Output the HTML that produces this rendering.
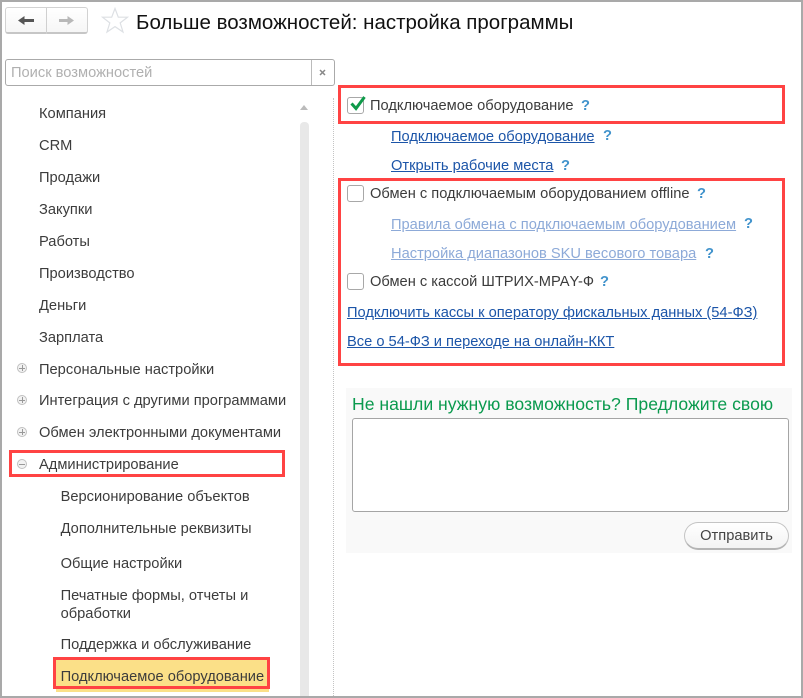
<!DOCTYPE html>
<html><head><meta charset="utf-8"><style>
html,body{margin:0;padding:0;background:#fff}
#p{position:relative;width:803px;height:698px;overflow:hidden;background:#fff;font-family:"Liberation Sans",sans-serif;font-size:14.67px;color:#3c3c3c}
#p div,#p a,#p svg{position:absolute}
.t{line-height:20px;white-space:nowrap;height:20px;margin-top:1px}
a.l{color:#1c55a8;text-decoration:underline;line-height:20px;white-space:nowrap;margin-top:1px}
a.d{color:#8daad8;text-decoration:underline;line-height:20px;white-space:nowrap;margin-top:1px}
.q{color:#4193cc;font-weight:bold;line-height:20px;font-size:14.67px;margin-top:1px}
.r{border:3px solid #ff4343;box-sizing:border-box}
.c{width:17px;height:17px;border:1px solid #a8a8a8;border-radius:3px;box-sizing:border-box;background:#fff}
.pm{width:10px;height:10px;border:1px solid #c0c0c0;border-radius:50%;left:17px;box-sizing:border-box;background:#f2f2f2}
.pm::after{content:"";position:absolute;left:1px;top:3.5px;width:6px;height:1px;background:#999}
.pl::before{content:"";position:absolute;left:3.5px;top:1px;width:1px;height:6px;background:#999}
</style></head><body><div id="p">
<div style="left:0;top:0;width:803px;height:698px;border:solid #a9a9a9;border-width:2px 2px 2px 2px;box-sizing:border-box"></div>

<div style="left:5px;top:7px;width:83px;height:27px;border:1px solid #d2d2d2;border-bottom:2px solid #c6c6c6;border-radius:3px;box-sizing:border-box;background:linear-gradient(#fff,#f6f6f6)"></div>
<div style="left:46px;top:8px;width:1px;height:26px;background:#d0d0d0"></div>
<svg style="left:18px;top:15px" width="17" height="11" viewBox="0 0 17 11"><path d="M0 5.5L6.5 1V4H16V7H6.5V10Z" fill="#555"/></svg>
<svg style="left:58px;top:15px" width="17" height="11" viewBox="0 0 17 11"><path d="M16 5.5L9.5 1V4H1V7H9.5V10Z" fill="#b8b8b8"/></svg>
<svg style="left:101px;top:7px" width="28" height="27" viewBox="0 0 28 27"><path d="M14 1.5L17.3 10.2H26.5L19.2 15.9L22 25L14 19.6L6 25L8.8 15.9L1.5 10.2H10.7Z" fill="#fff" stroke="#dde0e4" stroke-width="1.2"/></svg>
<div class="t" style="left:136px;top:10px;height:24px;line-height:24px;font-size:20.5px;color:#111">Больше возможностей: настройка программы</div>

<div style="left:5px;top:59px;width:330px;height:27px;border:1px solid #aaa;border-radius:3px;box-sizing:border-box;background:#fff"></div>
<div style="left:311px;top:60px;width:1px;height:25px;background:#bbb"></div>
<div class="t" style="left:11px;top:62px;color:#b0b0b0">Поиск возможностей</div>
<svg style="left:319px;top:69px" width="7" height="7" viewBox="0 0 7 7"><path d="M1 1L6 6M6 1L1 6" stroke="#888" stroke-width="1.5"/></svg>

<svg style="left:299px;top:104px" width="10" height="7" viewBox="0 0 10 7"><path d="M5 1L9 6H1Z" fill="#bbb"/></svg>
<div style="left:300px;top:122px;width:9px;height:574px;background:#e8e8e8;border-radius:4px 4px 0 0"></div>
<div style="left:333px;top:98px;width:0;height:598px;border-left:1px dotted #c4c4c4"></div>

<div class="t" style="left:39px;top:103px">Компания</div>
<div class="t" style="left:39px;top:135px">CRM</div>
<div class="t" style="left:39px;top:167px">Продажи</div>
<div class="t" style="left:39px;top:199px">Закупки</div>
<div class="t" style="left:39px;top:231px">Работы</div>
<div class="t" style="left:39px;top:263px">Производство</div>
<div class="t" style="left:39px;top:295px">Деньги</div>
<div class="t" style="left:39px;top:327px">Зарплата</div>
<div class="pm pl" style="top:363px"></div>
<div class="t" style="left:39px;top:359px">Персональные настройки</div>
<div class="pm pl" style="top:395px"></div>
<div class="t" style="left:39px;top:390px">Интеграция с другими программами</div>
<div class="pm pl" style="top:427px"></div>
<div class="t" style="left:39px;top:422px">Обмен электронными документами</div>
<div class="r" style="left:9px;top:450px;width:276px;height:27px"></div>
<div class="pm" style="top:459px"></div>
<div class="t" style="left:39px;top:454px">Администрирование</div>
<div class="t" style="left:60.6px;top:486px">Версионирование объектов</div>
<div class="t" style="left:60.6px;top:518px">Дополнительные реквизиты</div>
<div class="t" style="left:60.6px;top:553px">Общие настройки</div>
<div class="t" style="left:60.6px;top:585px">Печатные формы, отчеты и</div>
<div class="t" style="left:60.6px;top:603px">обработки</div>
<div class="t" style="left:60.6px;top:634px">Поддержка и обслуживание</div>
<div style="left:56px;top:660px;width:213px;height:32px;background:#fbe088"></div>
<div class="r" style="left:53px;top:657px;width:217px;height:32px"></div>
<div class="t" style="left:60.6px;top:666px">Подключаемое оборудование</div>

<div class="r" style="left:338px;top:85px;width:447px;height:39px"></div>
<div class="c" style="left:347px;top:97px"></div>
<svg style="left:350px;top:95px" width="16" height="17" viewBox="0 0 16 17"><path d="M1.5 8.5L6 13.5L14.5 2" fill="none" stroke="#0f9a4a" stroke-width="3"/></svg>
<div class="t" style="left:370px;top:95px">Подключаемое оборудование</div>
<div class="q" style="left:581px;top:95px">?</div>
<a class="l" style="left:391px;top:126px">Подключаемое оборудование</a>
<div class="q" style="left:603px;top:125px">?</div>
<a class="l" style="left:391px;top:155px">Открыть рабочие места</a>
<div class="q" style="left:561px;top:155px">?</div>

<div class="r" style="left:338px;top:178px;width:447px;height:188px"></div>
<div class="c" style="left:347px;top:185px"></div>
<div class="t" style="left:370px;top:183px">Обмен с подключаемым оборудованием offline</div>
<div class="q" style="left:697px;top:183px">?</div>
<a class="d" style="left:391px;top:214px">Правила обмена с подключаемым оборудованием</a>
<div class="q" style="left:744px;top:213px">?</div>
<a class="d" style="left:391px;top:243px">Настройка диапазонов SKU весового товара</a>
<div class="q" style="left:705px;top:243px">?</div>
<div class="c" style="left:347px;top:273px"></div>
<div class="t" style="left:370px;top:271px">Обмен с кассой ШТРИХ-МРАY-Ф</div>
<div class="q" style="left:600px;top:271px">?</div>
<a class="l" style="left:347px;top:302px">Подключить кассы к оператору фискальных данных (54-ФЗ)</a>
<a class="l" style="left:347px;top:331px">Все о 54-ФЗ и переходе на онлайн-ККТ</a>

<div style="left:346px;top:388px;width:446px;height:165px;background:#f9f9f9"></div>
<div class="t" style="left:352px;top:393px;color:#0a9a4e;font-size:17.63px">Не нашли нужную возможность? Предложите свою</div>
<div style="left:352px;top:418px;width:437px;height:94px;background:#fff;border:1px solid #a5a5a5;border-radius:3px;box-sizing:border-box"></div>
<div style="left:684px;top:522px;width:105px;height:28px;line-height:27px;white-space:nowrap;text-align:center;border:1px solid #c4c4c4;border-bottom:2px solid #b4b4b4;border-radius:14px;box-sizing:border-box;background:linear-gradient(#fff,#f3f3f3);color:#444">Отправить</div>
</div></body></html>
